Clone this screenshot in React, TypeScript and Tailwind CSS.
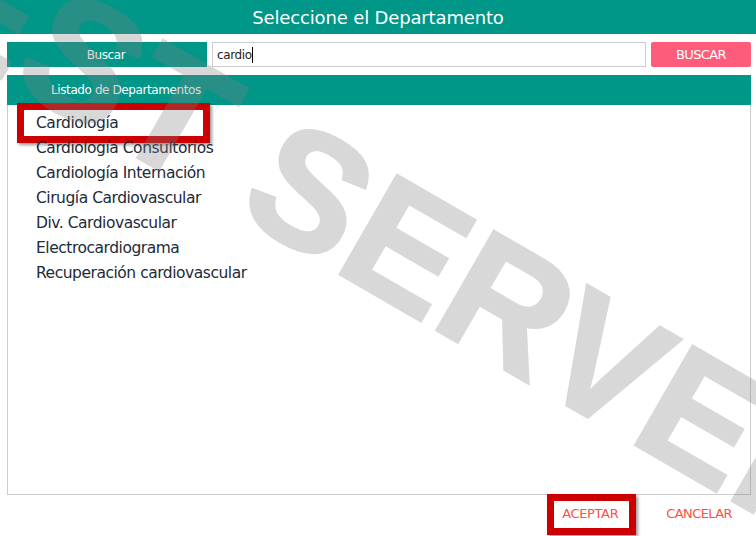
const FONT = 'font-["DejaVu_Sans",sans-serif]'

const DEPARTMENTS = [
  'Cardiología',
  'Cardiología Consultorios',
  'Cardiología Internación',
  'Cirugía Cardiovascular',
  'Div. Cardiovascular',
  'Electrocardiograma',
  'Recuperación cardiovascular',
]

// red annotation frame drawn over the screenshot
function Mark({ className }: { className: string }) {
  return (
    <span
      className={`pointer-events-none absolute border-[7px] border-[#cc0000] shadow-[2px_2px_3px_rgba(0,0,0,0.4)] ${className}`}
    />
  )
}

export default function App() {
  return (
    <div className={`relative h-[536px] w-[756px] overflow-hidden bg-white ${FONT}`}>
      <div className="flex h-[34px] items-center justify-center bg-[#009688] text-[18px] tracking-[-0.15px] text-white">
        Seleccione el Departamento
      </div>

      <div className="mt-2 flex h-[25px] pl-[7px] pr-[5px]">
        <div className="flex w-[200px] items-center justify-center bg-[#009688] pr-[2px] text-[12px] tracking-[-0.4px] text-white">
          Buscar
        </div>
        <div className="ml-[5px] flex w-[434px] items-center border border-[#cccccc] pl-[4px] text-[12px] tracking-[-0.4px] text-[#222]">
          cardio<span className="h-[16px] w-px bg-black" />
        </div>
        <button className="ml-[5px] w-[100px] rounded-[2px] bg-[#ff5c7c] text-[13px] tracking-[-0.6px] text-white">
          BUSCAR
        </button>
      </div>

      <div className="ml-[7px] mr-[5px] mt-2 flex h-[30px] items-center bg-[#009688] pl-[44px] text-[12px] tracking-[-0.4px] text-white">
        Listado de Departamentos
      </div>

      <ul className="ml-[7px] mr-[5px] h-[390px] border border-t-0 border-[#cccccc] pl-[28px] pt-[6px] text-[#222b38]">
        {DEPARTMENTS.map((d, i) => (
          <li key={d} className="relative flex h-[25px] items-center text-[15.5px] tracking-[-0.47px]">
            {d}
            {i === 0 && <Mark className="left-[-19px] top-[-8px] h-[40px] w-[193px]" />}
          </li>
        ))}
      </ul>

      <div className="mr-[24px] flex h-[41px] items-center justify-end gap-[48px] pb-[4px] text-[13px] tracking-[-0.6px] text-[#ff5040]">
        <span className="relative tracking-[-0.35px]">
          ACEPTAR
          <Mark className="left-[-15px] top-[-10px] h-[41px] w-[89px]" />
        </span>
        <span>CANCELAR</span>
      </div>

      {/* TEST SERVER watermark */}
      <div className="pointer-events-none absolute left-[-108px] top-[-146px] origin-top-left rotate-30 whitespace-nowrap font-['Liberation_Sans',sans-serif] text-[166px] font-bold leading-none tracking-[1px] text-[#808080] opacity-30 [-webkit-text-stroke:3px_#808080]">
        TEST SERVER
      </div>
    </div>
  )
}
